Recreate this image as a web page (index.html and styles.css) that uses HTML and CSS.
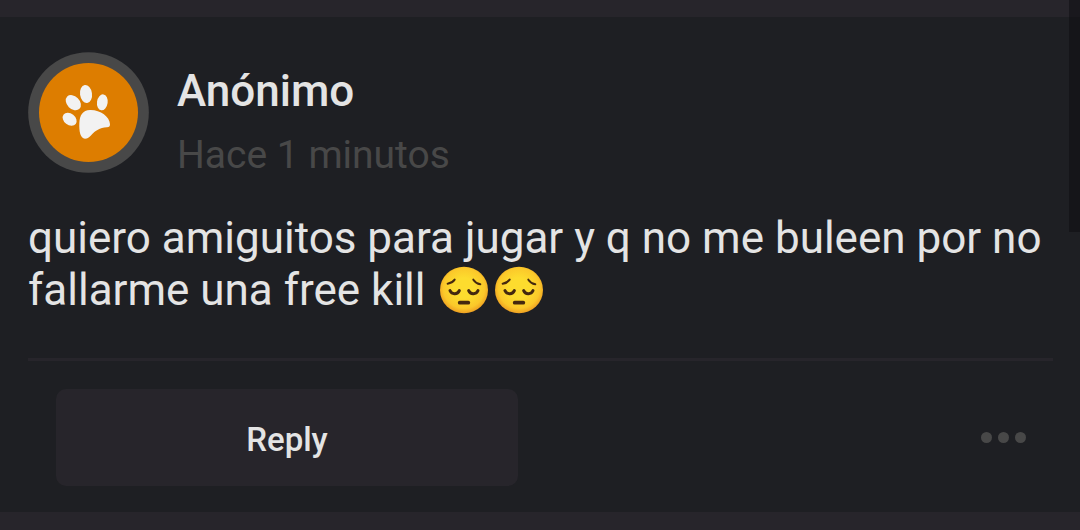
FILE: index.html
```
<!DOCTYPE html>
<html lang="es">
<head>
<meta charset="utf-8">
<title>Anónimo</title>
<meta name="viewport" content="width=device-width, initial-scale=1">
<link rel="stylesheet" href="styles.css">
</head>
<body>
<svg class="defs" aria-hidden="true">
  <defs>
    <radialGradient id="face" cx="50%" cy="46%" r="54%">
      <stop offset="0.4" stop-color="#fddc2e"/>
      <stop offset="0.8" stop-color="#fbc82a"/>
      <stop offset="1" stop-color="#ee9f22"/>
    </radialGradient>
    <symbol id="pensive" viewBox="0 0 144 144">
      <ellipse cx="72" cy="72" rx="72" ry="70" fill="url(#face)"/>
      <g fill="none" stroke="#44280f" stroke-linecap="round">
        <path d="M23 53Q37 51 44 41" stroke-width="6"/>
        <path d="M121 55Q107 52 100 41" stroke-width="6"/>
        <path d="M30 74Q35 84 45 83Q54 83 58 74" stroke-width="9"/>
        <path d="M86 74Q90 83 99 83Q109 84 114 74" stroke-width="9"/>
        <path d="M59 110H85" stroke-width="11"/>
      </g>
    </symbol>
  </defs>
</svg>
<main class="feed">
  <article class="post">
    <header class="author">
      <svg class="avatar" viewBox="24 24 363 363" role="img" aria-label="Avatar">
        <circle cx="205.500" cy="205.500" r="181" fill="#484848"/>
        <circle cx="205.500" cy="205.500" r="148.500" fill="#dd7d00"/>
        <g fill="#f2f2f2">
          <ellipse cx="198" cy="150" rx="18" ry="27" transform="rotate(-8 198 150)"/>
          <ellipse cx="247" cy="175" rx="16" ry="24" transform="rotate(8 247 175)"/>
          <ellipse cx="160" cy="176" rx="19" ry="26" transform="rotate(-45 160 176)"/>
          <ellipse cx="149" cy="226" rx="17" ry="23" transform="rotate(-52 149 226)"/>
          <path d="M178 238C179 213 188 199 210 198C240 197 269 217 270 241C270 247 268 249 261 250C238 252 228 259 212 275C206 281 202 284 195 284C181 283 177 263 178 238Z"/>
        </g>
      </svg>
      <div class="who">
        <h1 class="name">Anónimo</h1>
        <time class="time">Hace 1 minutos</time>
      </div>
    </header>
    <p class="message">quiero amiguitos para jugar y q no me buleen por no fallarme una free kill <span class="emojis"><svg class="emoji" role="img" aria-label="Cara pensativa"><use href="#pensive"/></svg><svg class="emoji" role="img" aria-label="Cara pensativa"><use href="#pensive"/></svg></span></p>
    <footer class="actions">
      <button class="reply" type="button">Reply</button>
      <button class="more" type="button" aria-label="Más opciones"><span class="dot"></span><span class="dot"></span><span class="dot"></span></button>
    </footer>
  </article>
  <div class="scrollbar"></div>
</main>
</body>
</html>
```
FILE: styles.css
```
* {
  box-sizing: border-box;
}

body {
  margin: 0;
  background: #27252b;
  color: #e4e4e4;
  font-family: Roboto, "Liberation Sans", sans-serif;
}

.defs {
  position: absolute;
  width: 0;
  height: 0;
}

.feed {
  padding: 17px 0 18px;
}

.post {
  padding: 35px 27px 26px 28px;
  background: #1e1f23;
}

.author {
  display: flex;
  align-items: flex-start;
  gap: 28px;
}

.avatar {
  width: 121px;
  height: 121px;
  flex: none;
}

.who {
  padding-top: 7px;
}

.name {
  margin: 0;
  font-size: 44px;
  line-height: 64px;
  font-weight: 500;
}

.time {
  display: block;
  color: #484848;
  font-size: 39px;
  line-height: 64px;
}

.message {
  margin: 25px 0 0;
  padding-bottom: 42px;
  border-bottom: 3px solid #27252b;
  font-size: 44px;
  line-height: 52px;
}

.emojis {
  display: inline-flex;
  align-items: center;
  gap: 7px;
  height: 52px;
  margin-left: 4px;
  vertical-align: top;
}

.emoji {
  width: 48px;
  height: 48px;
}

.actions {
  display: flex;
  align-items: center;
  justify-content: space-between;
  padding: 28px 27px 0 28px;
}

.reply {
  flex: 0 1 462px;
  padding: 26px 24px 22px;
  border: 0;
  border-radius: 10px;
  background: #27252b;
  color: #e4e4e4;
  font-family: inherit;
  font-size: 33px;
  line-height: 49px;
  font-weight: 500;
}

.more {
  display: flex;
  gap: 6px;
  padding: 0;
  border: 0;
  background: none;
}

.dot {
  width: 11px;
  height: 11px;
  border-radius: 50%;
  background: #484848;
}

.scrollbar {
  position: absolute;
  top: 0;
  right: 0;
  width: 11px;
  height: 232px;
  background: rgba(12, 12, 16, 0.5);
}
```
